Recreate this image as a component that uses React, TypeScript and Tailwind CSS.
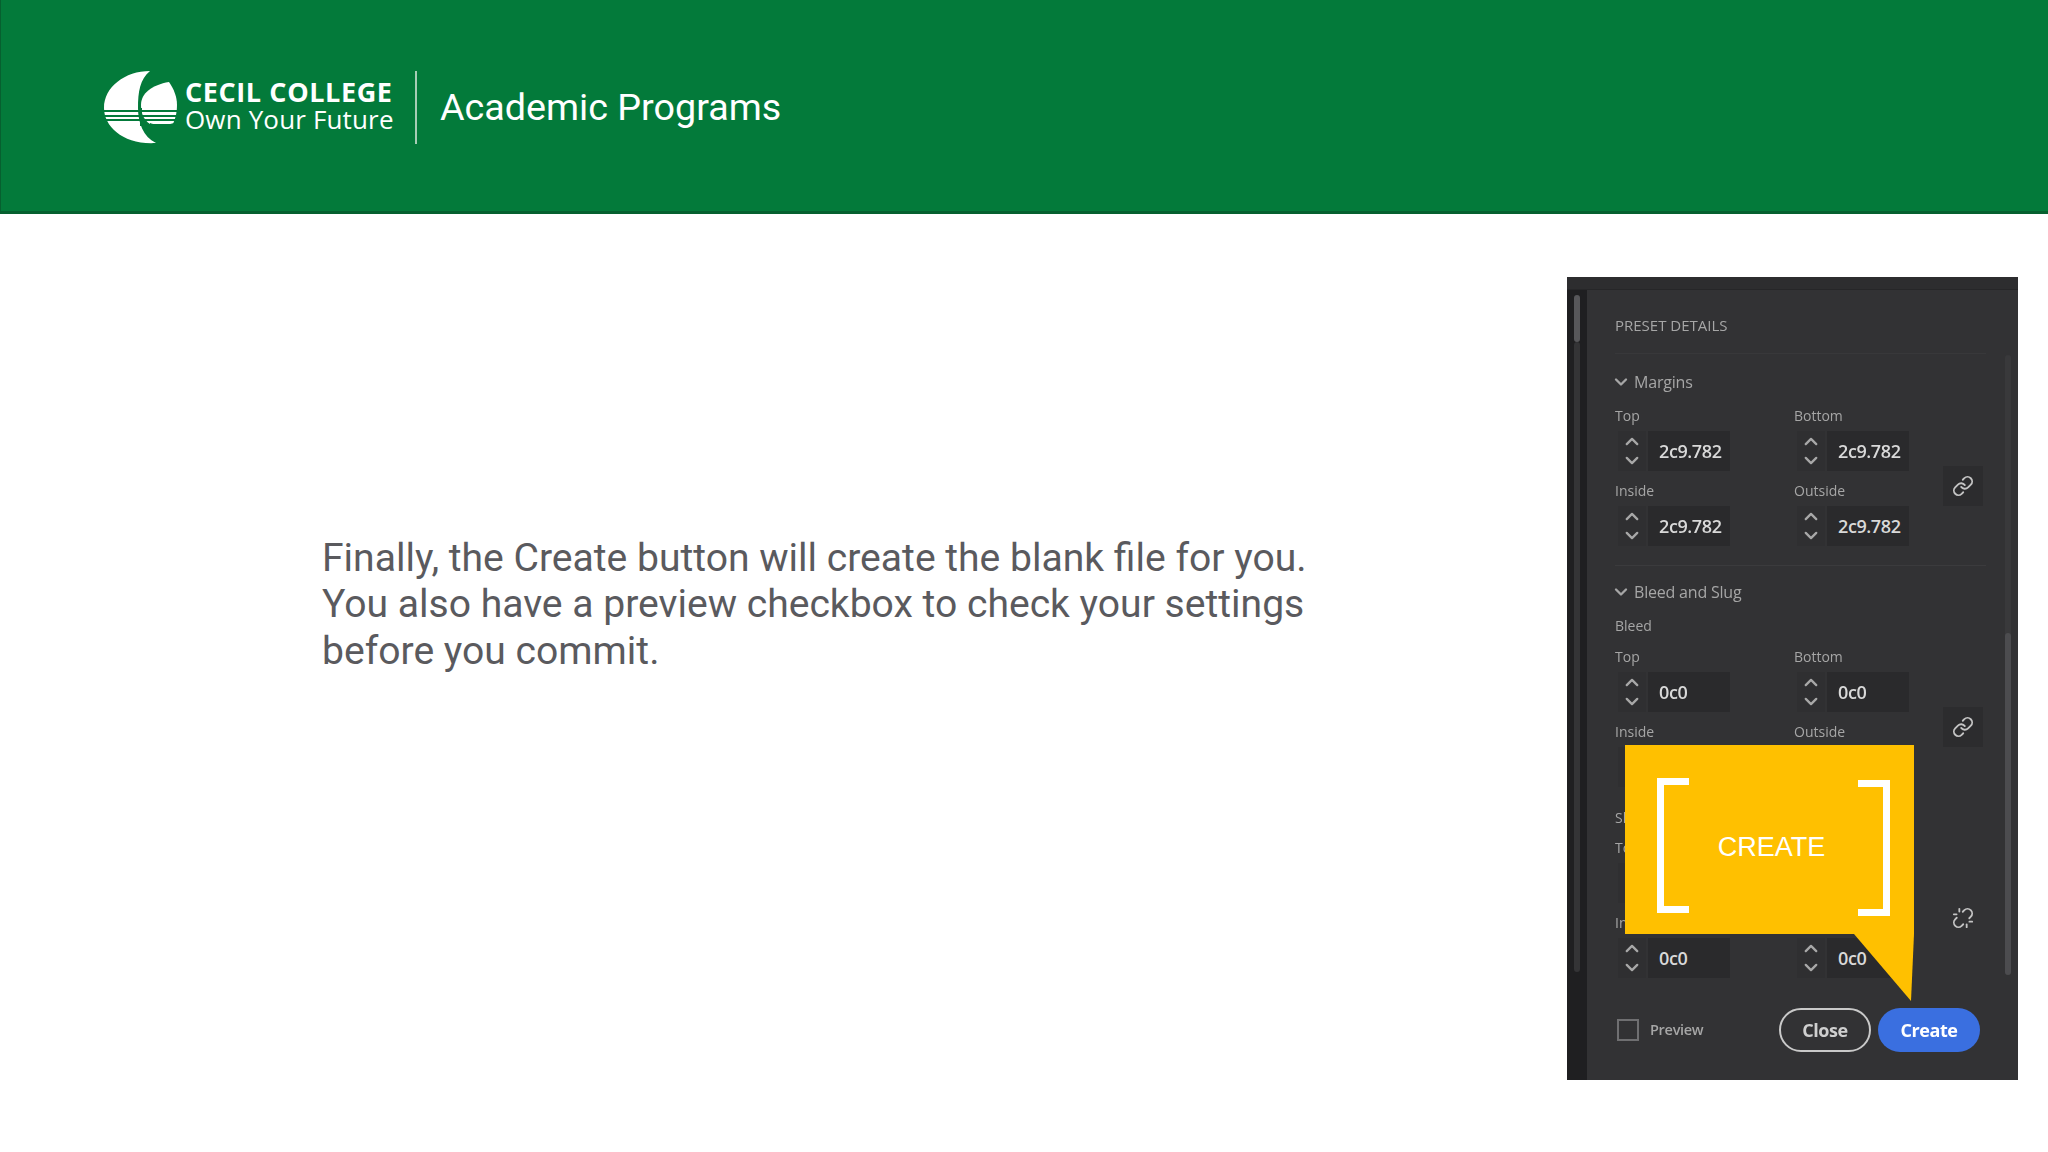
import React from 'react'
import { ChevronDown, ChevronUp, Link, Unlink } from 'lucide-react'

const Logo = () => (
  <svg width="80" height="80" viewBox="0 0 80 80" className="shrink-0">
    <path d="M50 4C25 4 4 20 4 41C4 60 24 78 56 76C43 70 38 55 38 41C38 25 40 12 50 4Z" fill="#fff" />
    <path d="M69 15C52 18 41 26 41 38C41 47 44 53 50 57L73 57C76 50 77 44 77 38C77 30 74 22 69 15Z" fill="#fff" />
    <g fill="#037a3a">
      <rect x="0" y="43" width="80" height="2" />
      <rect x="0" y="48" width="80" height="2" />
      <rect x="0" y="52" width="80" height="2" />
      <rect x="40" y="41" width="2" height="18" />
      <path d="M50 56C54 58 66 59 74 56L74 62L50 62Z" />
    </g>
  </svg>
)

const Field = ({ label, value }: { label: string; value: string }) => (
  <div>
    <div className="h-[18px] text-[14px] leading-[18px] text-[#a6a6a6]">{label}</div>
    <div className="mt-[6px] mb-[2px] flex h-[40px] items-stretch gap-[2px] pl-[3px]">
      <div className="flex w-[28px] flex-col items-center justify-center bg-[#2f2f31] text-[#a8a8a8]">
        <ChevronUp size={22} strokeWidth={2.6} />
        <ChevronDown size={22} strokeWidth={2.6} className="-mt-[2px]" />
      </div>
      <div className="flex w-[82px] items-center bg-[#2a2a2c] pl-[11px] text-[18px] font-semibold tracking-[-0.4px] text-[#d9d9d9]">
        {value}
      </div>
    </div>
  </div>
)

// labels and values are read in the order top, bottom, inside, outside; parts hidden by the callout stay empty
const FieldGroup = ({ labels, values, icon, framed = true }: { labels: string[]; values: string[]; icon: React.ReactNode; framed?: boolean }) => (
  <div className="relative grid grid-cols-[179px_149px_40px] gap-y-[9px]">
    <div className="col-start-1 row-start-1"><Field label={labels[0]} value={values[0]} /></div>
    <div className="col-start-2 row-start-1"><Field label={labels[1]} value={values[1]} /></div>
    <div className="col-start-1 row-start-2"><Field label={labels[2]} value={values[2]} /></div>
    <div className="col-start-2 row-start-2"><Field label={labels[3]} value={values[3]} /></div>
    <div
      className={`col-start-3 row-span-2 row-start-1 mb-[42px] flex h-[40px] w-[40px] items-center justify-center self-end text-[#c4c4c4] ${
        framed ? 'bg-[#2c2c2e]' : ''
      }`}
    >
      {icon}
    </div>
  </div>
)

const SectionTitle = ({ title }: { title: string }) => (
  <div className="flex h-[20px] items-center gap-[3px] text-[16px] tracking-[-0.2px] text-[#a6a6a6]">
    <ChevronDown size={20} strokeWidth={2.8} className="-ml-[4px]" />
    <span>{title}</span>
  </div>
)

const Callout = () => (
  <div className="absolute left-[58px] top-[468px] h-[189px] w-[289px] bg-[#ffc000]">
    <div className="flex items-start pl-[32px] pr-[24px] pt-[33px]">
      <div className="h-[135px] w-[32px] border-y-[7px] border-l-[7px] border-white" />
      <div className="flex-1 pt-[53px] pr-[4px] text-center font-['Liberation_Sans',sans-serif] text-[27px] leading-[32px] text-white">
        CREATE
      </div>
      <div className="mt-[2px] h-[136px] w-[32px] border-y-[7px] border-r-[7px] border-white" />
    </div>
    <svg className="absolute left-[229px] top-[189px]" width="60" height="67" viewBox="0 0 60 67">
      <polygon points="0,0 60,0 57,67" fill="#ffc000" />
    </svg>
  </div>
)

const Panel = () => (
  <div className="relative mr-[30px] mt-[63px] flex h-[803px] w-[451px] shrink-0 flex-col overflow-hidden bg-[#323234] font-['Open_Sans',sans-serif]">
    <div className="h-[13px] shrink-0 border-b border-[#262628] bg-[#2d2d2f]" />
    <div className="flex min-h-0 flex-1 blur-[0.4px]">
      {/* left rail */}
      <div className="w-[20px] shrink-0 bg-[#1f1f21] pl-[7px] pt-[5px]">
        <div className="h-[47px] w-[6px] rounded-full bg-[#57575a]" />
        <div className="h-[630px] w-[6px] rounded-full bg-[#343436]" />
      </div>

      <div className="relative flex-1 pl-[28px]">
        <div className="mt-[25px] h-[20px] text-[15px] leading-[20px] text-[#a6a6a6]">PRESET DETAILS</div>
        <div className="mr-[32px] mt-[18px] h-px bg-[#38383a]" />
        <div className="mt-[18px]">
          <SectionTitle title="Margins" />
        </div>
        <div className="mt-[15px]">
          <FieldGroup
            labels={['Top', 'Bottom', 'Inside', 'Outside']}
            values={['2c9.782', '2c9.782', '2c9.782', '2c9.782']}
            icon={<Link size={22} />}
          />
        </div>
        <div className="mr-[32px] mt-[17px] h-px bg-[#3b3b3d]" />
        <div className="mt-[16px]">
          <SectionTitle title="Bleed and Slug" />
        </div>
        <div className="mt-[15px] h-[18px] text-[14px] leading-[18px] text-[#a6a6a6]">Bleed</div>
        <div className="mt-[13px]">
          <FieldGroup
            labels={['Top', 'Bottom', 'Inside', 'Outside']}
            values={['0c0', '0c0', '', '']}
            icon={<Link size={22} />}
          />
        </div>
        <div className="mt-[20px] h-[18px] text-[14px] leading-[18px] text-[#a6a6a6]">Slug</div>
        <div className="mt-[12px]">
          <FieldGroup
            labels={['Top', '', 'Inside', '']}
            values={['', '', '0c0', '0c0']}
            icon={<Unlink size={22} />}
            framed={false}
          />
        </div>

        {/* right scrollbar */}
        <div className="absolute right-[7px] top-[65px] h-[620px] w-[6px] rounded-full bg-[#39393b]">
          <div className="absolute bottom-0 h-[342px] w-[6px] rounded-full bg-[#4c4c4f]" />
        </div>

        {/* footer */}
        <div className="absolute bottom-[28px] left-[30px] right-[38px] flex h-[44px] items-center">
          <div className="h-[22px] w-[22px] border-2 border-[#6f6f71]" />
          <span className="ml-[11px] text-[14.5px] font-semibold tracking-[-0.3px] text-[#a6a6a6]">Preview</span>
          <button className="ml-auto h-[44px] w-[92px] rounded-full border-2 border-[#c9c9c9] text-[18px] font-bold tracking-[-0.4px] text-[#cfcfcf]">
            Close
          </button>
          <button className="ml-[7px] h-[44px] w-[102px] rounded-full bg-[#3a6fe0] text-[18px] font-bold tracking-[-0.4px] text-white">
            Create
          </button>
        </div>
      </div>
    </div>
    <Callout />
  </div>
)

export default function App() {
  return (
    <div className="flex h-[1152px] w-[2048px] flex-col overflow-hidden bg-white">
      <header className="flex h-[214px] shrink-0 items-center border-b-[3px] border-l border-[#06602f] bg-[#037a3a] pl-[99px] pt-[3px]">
        <Logo />
        <div className="ml-[5px] -mt-[5px] w-[212px] font-['Open_Sans',sans-serif] text-white">
          <div className="text-[27px] font-bold leading-[28px] tracking-[0.6px]">CECIL COLLEGE</div>
          <div className="text-[26px] leading-[26px] tracking-[0.15px]">Own Your Future</div>
        </div>
        <div className="ml-[18px] h-[73px] w-[2px] bg-[#a7cdb5]" />
        <div className="ml-[23px] font-['Roboto',sans-serif] text-[37.7px] text-white">Academic Programs</div>
      </header>

      <main className="flex flex-1 justify-between">
        <p className="ml-[322px] mt-[321px] w-[1040px] font-['Roboto',sans-serif] text-[39.1px] leading-[46.3px] text-[#5a5a5e]">
          Finally, the Create button will create the blank file for you.
          <br />
          You also have a preview checkbox to check your settings
          <br />
          before you commit.
        </p>
        <Panel />
      </main>
    </div>
  )
}
